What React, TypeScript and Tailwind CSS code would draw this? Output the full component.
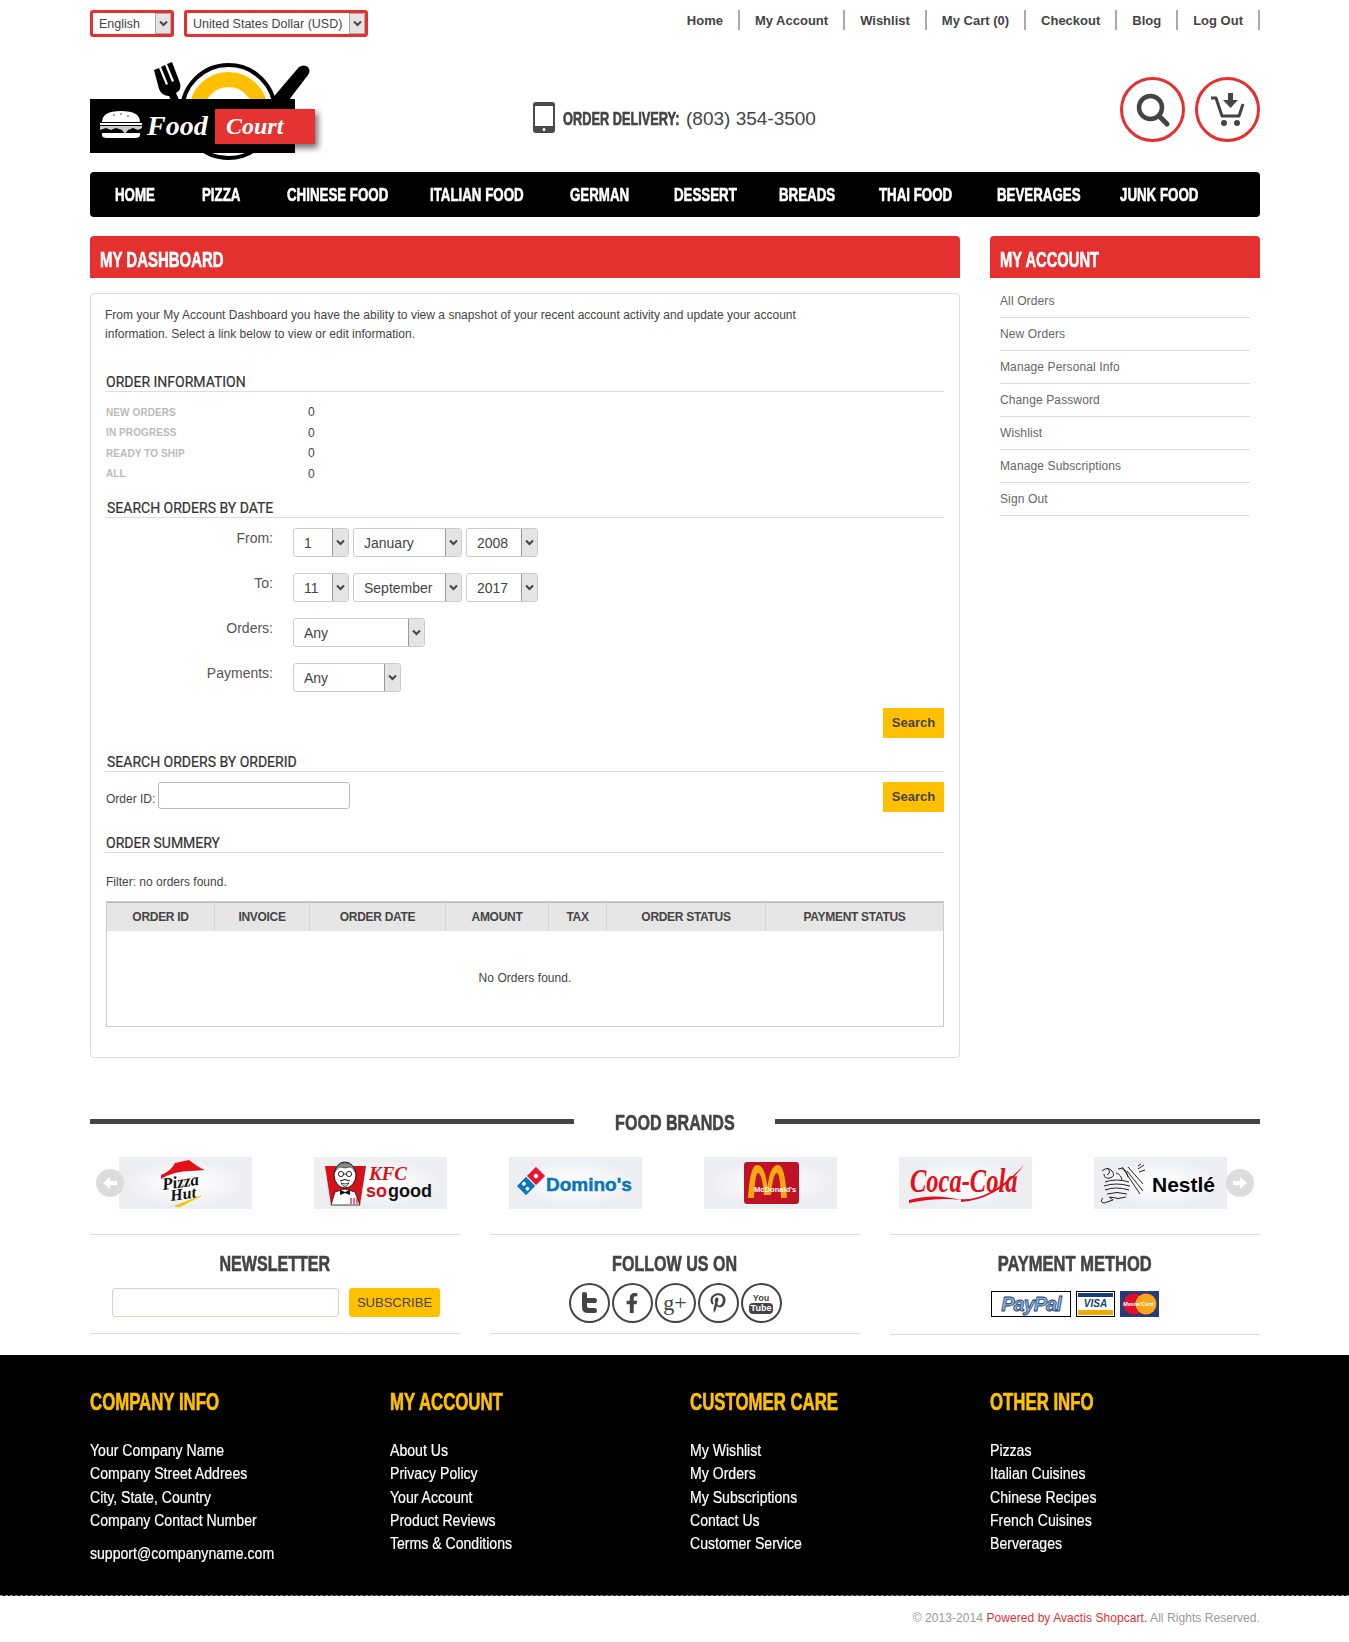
import React from "react";
import { FaFacebookF, FaPinterestP } from "react-icons/fa";

const sans = "font-['Liberation_Sans',Arial,sans-serif]";
const serif = "Liberation Serif";

// 細いフォントが無いので横方向に縮めて見出しを作る
const squeezeLeft = "inline-block origin-left whitespace-nowrap";
const squeezeCenter = "inline-block origin-center whitespace-nowrap";
const heavy = "[-webkit-text-stroke:0.6px_currentColor]";

const navItems = [
  ["HOME", "w-[87px]"],
  ["PIZZA", "w-[85px]"],
  ["CHINESE FOOD", "w-[143px]"],
  ["ITALIAN FOOD", "w-[140px]"],
  ["GERMAN", "w-[104px]"],
  ["DESSERT", "w-[105px]"],
  ["BREADS", "w-[100px]"],
  ["THAI FOOD", "w-[118px]"],
  ["BEVERAGES", "w-[123px]"],
  ["JUNK FOOD", "w-[90px]"],
];

const topLinks = ["Home", "My Account", "Wishlist", "My Cart (0)", "Checkout", "Blog", "Log Out"];

const accountLinks = [
  "All Orders",
  "New Orders",
  "Manage Personal Info",
  "Change Password",
  "Wishlist",
  "Manage Subscriptions",
  "Sign Out",
];

const footerCols = [
  { title: "COMPANY INFO", links: ["Your Company Name", "Company Street Addrees", "City, State, Country", "Company Contact Number"] },
  { title: "MY ACCOUNT", links: ["About Us", "Privacy Policy", "Your Account", "Product Reviews", "Terms & Conditions"] },
  { title: "CUSTOMER CARE", links: ["My Wishlist", "My Orders", "My Subscriptions", "Contact Us", "Customer Service"] },
  { title: "OTHER INFO", links: ["Pizzas", "Italian Cuisines", "Chinese Recipes", "French Cuisines", "Berverages"] },
];

const tableCols = [
  ["ORDER ID", "w-[108px]"],
  ["INVOICE", "w-[95px]"],
  ["ORDER DATE", "w-[136px]"],
  ["AMOUNT", "w-[103px]"],
  ["TAX", "w-[58px]"],
  ["ORDER STATUS", "w-[159px]"],
  ["PAYMENT STATUS", "flex-1"],
];

const Arrow = () => (
  <svg width="9" height="7" viewBox="0 0 9 7">
    <path d="M1 1.5 L4.5 5 L8 1.5" fill="none" stroke="#444" strokeWidth="2" />
  </svg>
);

// 角丸のセレクト風ボックス
const FakeSelect = ({ value, width }: { value: string; width: string }) => (
  <div className={`flex h-[29px] items-stretch rounded-[3px] border border-[#ccc] bg-white ${width}`}>
    <span className="flex-1 pl-[10px] text-[14px] leading-[29px] text-[#444]">{value}</span>
    <span className="flex w-[16px] items-center justify-center rounded-r-[3px] border-l border-[#999] bg-[#e4e4e4]">
      <Arrow />
    </span>
  </div>
);

const TopSelect = ({ value, width }: { value: string; width: string }) => (
  <div className={`flex h-[27px] items-stretch rounded-[3px] border-[3px] border-[#e53030] bg-white ${width}`}>
    <span className="flex-1 pl-[6px] text-[12.5px] leading-[23px] text-[#444]">{value}</span>
    <span className="flex w-[16px] items-center justify-center border border-[#aaa] bg-[#e4e4e4]">
      <Arrow />
    </span>
  </div>
);

const SectionTitle = ({ text, className }: { text: string; className: string }) => (
  <div className={`h-[19px] border-b border-[#ddd] pl-[1px] font-['Roboto'] text-[14px] leading-[19px] text-[#333] [-webkit-text-stroke:0.2px_#333] ${className}`}>{text}</div>
);

const Logo = () => (
  <svg width="240" height="112" viewBox="0 0 240 112">
    <defs>
      <filter id="logoShadow" x="-10%" y="-10%" width="130%" height="150%">
        <feDropShadow dx="3" dy="4" stdDeviation="3" floodColor="#000" floodOpacity="0.55" />
      </filter>
    </defs>
    {/* フォークとナイフ */}
    <g fill="#000">
      <path d="M64 12 l5 -2 l7 17 l2 -1 l-7 -17 l4 -2 l7 17 l2 -1 l-7 -17 l5 -2 l8 21 q2 7 -4 10 l8 18 l-7 3 l-8 -18 q-7 0 -10 -7 z" />
      <path d="M209 9 q5 -3 9 0 q3 4 0 8 l-26 34 l-12 -8 z" />
    </g>
    <circle cx="138.5" cy="53.5" r="46.5" fill="#fff" stroke="#000" strokeWidth="4" />
    <circle cx="138.5" cy="53.5" r="32" fill="#fff" stroke="#ffc000" strokeWidth="15" />
    <rect x="0" y="41" width="205" height="54" fill="#000" />
    <rect x="125" y="51" width="100" height="35" fill="#e53030" filter="url(#logoShadow)" />
    {/* バーガー */}
    <path d="M12 64 q0 -11 19 -11 q19 0 19 11 z" fill="#fff" />
    <g fill="#000">
      <circle cx="24" cy="57" r="0.7" />
      <circle cx="31" cy="56" r="0.7" />
      <circle cx="38" cy="58" r="0.7" />
    </g>
    <rect x="10" y="65" width="42" height="2" fill="#fff" />
    <path d="M10 68 h42 v2 l-4 2 l-5 -2 l-5 2 l-3 4 l-3 -4 l-6 -2 l-5 2 l-5 -2 l-6 2 z" fill="#ccc" />
    <path d="M12 75 h38 v2 q0 3 -5 3 h-28 q-5 0 -5 -3 z" fill="#fff" />
    <text x="57" y="77" fill="#fff" fontFamily={serif} fontStyle="italic" fontWeight="700" fontSize="28">Food</text>
    <text x="136" y="76" fill="#fff" fontFamily={serif} fontStyle="italic" fontWeight="700" fontSize="24">Court</text>
  </svg>
);

const PizzaHut = () => (
  <svg width="133" height="52" viewBox="0 0 133 52">
    <path d="M42 18 Q52 14 56 6 L70 3 Q80 11 86 13 L72 14 Q55 14 42 22 Z" fill="#e3101a" />
    <text x="0" y="0" transform="translate(44 33) rotate(-8)" fontFamily={serif} fontStyle="italic" fontWeight="700" fontSize="17" fill="#111">Pizza</text>
    <text x="0" y="0" transform="translate(52 44) rotate(-8)" fontFamily={serif} fontStyle="italic" fontWeight="700" fontSize="16" fill="#111">Hut</text>
    <path d="M56 49 L82 39 L60 50 Z" fill="#f5c800" stroke="#f5c800" />
  </svg>
);

const Kfc = () => (
  <svg width="133" height="52" viewBox="0 0 133 52">
    <path d="M11 9 L52 9 L46 48 L17 48 Z" fill="#d7101a" />
    {/* 人物 */}
    <path d="M17 48 L21 35 L31 32 L41 35 L46 48 Z" fill="#fff" stroke="#111" strokeWidth="0.8" />
    <ellipse cx="31" cy="18" rx="11" ry="13" fill="#fff" stroke="#111" strokeWidth="1" />
    <path d="M21 15 q1 -9 10 -9 q9 0 10 9 q-2 -5 -5 -5 q-5 2 -10 0 q-3 1 -5 5 z" fill="#888" stroke="#111" strokeWidth="0.5" />
    <circle cx="27" cy="17" r="2.6" fill="#fff" stroke="#111" strokeWidth="0.9" />
    <circle cx="35" cy="17" r="2.6" fill="#fff" stroke="#111" strokeWidth="0.9" />
    <path d="M29.6 17 h2.8" stroke="#111" strokeWidth="0.8" />
    <path d="M26 24 q5 -3 10 0" fill="none" stroke="#111" strokeWidth="1" />
    <path d="M27 26 q4 7 8 0 q-4 2 -8 0 z" fill="#fff" stroke="#111" strokeWidth="0.8" />
    <path d="M26 33 L31 35 L36 33 L36 38 L31 36 L26 38 Z" fill="#111" />
    <path d="M37 41 v6 M40 41 v6 M43 41 v6" stroke="#d7101a" strokeWidth="1.2" />
    <text x="55" y="23" fontFamily={serif} fontStyle="italic" fontWeight="700" fontSize="19" fill="#d7101a">KFC</text>
    <text x="52" y="40" fontFamily="Liberation Sans" fontWeight="700" fontSize="18" fill="#d7101a">so</text>
    <text x="74" y="40" fontFamily="Liberation Sans" fontWeight="700" fontSize="18" fill="#111">good</text>
  </svg>
);

const Dominos = () => (
  <svg width="133" height="52" viewBox="0 0 133 52">
    <g transform="rotate(45 22 24)">
      <rect x="15" y="10" width="14" height="14" fill="#e31837" stroke="#fff" />
      <rect x="15" y="24" width="14" height="14" fill="#0b76b8" stroke="#fff" />
      <circle cx="22" cy="17" r="2.2" fill="#fff" />
      <circle cx="19" cy="31" r="1.9" fill="#fff" />
      <circle cx="25" cy="32" r="1.9" fill="#fff" />
    </g>
    <text x="37" y="34" fontFamily="Liberation Sans" fontWeight="700" fontSize="19" fill="#0b76b8" stroke="#0b76b8" strokeWidth="0.5">Domino's</text>
  </svg>
);

const Mcdonalds = () => (
  <svg width="133" height="52" viewBox="0 0 133 52">
    <rect x="40" y="5" width="55" height="42" rx="3" fill="#c01226" />
    <path d="M44 41 Q46 8 53 8 Q61 8 63.5 30 Q66 8 74 8 Q81 8 83 41 H77 Q76 16 73 16 Q69 16 67 38 H60 Q58 16 54 16 Q51 16 50 41 Z" fill="#f8a80f" />
    <text x="50" y="35" fontFamily="Liberation Sans" fontWeight="700" fontSize="7.6" fill="#fff">McDonald's</text>
  </svg>
);

const CocaCola = () => (
  <svg width="133" height="52" viewBox="0 0 133 52">
    <text x="0" y="0" transform="translate(11 35) scale(1 1.4)" fontFamily={serif} fontStyle="italic" fontWeight="700" fontSize="24.5" fill="#e3101a">Coca-Cola</text>
    <path d="M10 43 Q35 36 62 43 Q40 40 10 46 Z M62 42 Q90 45 125 8 Q100 42 62 45 Z" fill="#e3101a" />
  </svg>
);

const Nestle = () => (
  <svg width="133" height="52" viewBox="0 0 133 52">
    <g fill="none" stroke="#222" strokeWidth="1">
      <path d="M8 14 q6 -5 10 0 q4 5 -2 7 q-6 1 -6 -4 M13 11 q5 4 0 7" />
      <path d="M11 25 q11 -4 24 0 M10 29 q12 -4 26 0 M11 33 q11 -4 24 0 M13 37 q10 -3 20 0 M16 40 q8 3 16 0" />
      <path d="M24 12 q8 -3 10 8 M22 16 q6 2 6 8 M28 10 l18 27 M34 10 l15 17 M33 14 l16 20" />
      <path d="M44 12 l6 -4 M45 15 l6 -2 M44 9 l3 -2 M9 41 q-4 4 1 5 l9 -3 l-4 -3" />
    </g>
    <text x="58" y="35" fontFamily="Liberation Sans" fontWeight="700" fontSize="21" fill="#000">Nestlé</text>
  </svg>
);

const brands = [<PizzaHut />, <Kfc />, <Dominos />, <Mcdonalds />, <CocaCola />, <Nestle />];

const Round = ({ children }: { children: React.ReactNode }) => (
  <div className="flex h-[40px] w-[41px] items-center justify-center rounded-[50%] border-2 border-[#444] text-[#444]">
    {children}
  </div>
);

const BrandArrow = ({ dir, className }: { dir: "left" | "right"; className: string }) => (
  <div className={`absolute top-[12px] flex h-[28px] w-[28px] items-center justify-center rounded-full bg-[#dcdcdc] ${className}`}>
    <svg width="16" height="14" viewBox="0 0 16 14" className={dir === "right" ? "" : "rotate-180"}>
      <path d="M1 5 H8 V1 L15 7 L8 13 V9 H1 Z" fill="#fff" />
    </svg>
  </div>
);

const BlockTitle = ({ text, scale = "scale-x-[0.73]" }: { text: string; scale?: string }) => (
  <div className="text-[22px] font-bold leading-[30px] text-[#444]">
    <span className={`${squeezeCenter} ${heavy} ${scale}`}>{text}</span>
  </div>
);

export default function App() {
  return (
    <div className={`h-[1642px] bg-white ${sans}`}>
      <div className="ml-[90px] w-[1170px]">
        {/* 上部バー */}
        <div className="flex h-[47px] justify-between pt-[10px]">
          <div className="flex gap-[10px]">
            <TopSelect value="English" width="w-[84px]" />
            <TopSelect value="United States Dollar (USD)" width="w-[184px]" />
          </div>
          <div className="flex h-[20px]">
            {topLinks.map((l) => (
              <span key={l} className="border-r-2 border-[#aaa] px-[15px] text-[13px] font-bold leading-[21px] text-[#444]">
                {l}
              </span>
            ))}
          </div>
        </div>

        {/* ロゴ行 */}
        <div className="flex h-[125px] items-start">
          <div className="mt-[11px] h-[112px] w-[240px]">
            <Logo />
          </div>
          <div className="ml-[203px] mt-[54px] flex items-center">
            <svg width="22" height="31" viewBox="0 0 22 31">
              <rect width="22" height="31" rx="3" fill="#4a4a4a" />
              <rect x="2" y="4" width="18" height="20" fill="#fff" />
              <circle cx="11" cy="27.5" r="1.5" fill="#fff" />
            </svg>
            <span className="ml-[8px] mt-[4px] w-[118px] text-[18px] font-bold text-[#444]">
              <span className={`${squeezeLeft} ${heavy} scale-x-[0.71]`}>ORDER DELIVERY:</span>
            </span>
            <span className="ml-[5px] mt-[4px] text-[19px] text-[#444]">(803) 354-3500</span>
          </div>
          <div className="ml-auto mt-[30px] flex gap-[10px]">
            <div className="flex h-[65px] w-[65px] items-center justify-center rounded-full border-[3px] border-[#e53030]">
              <svg width="34" height="34" viewBox="0 0 34 34" fill="none" stroke="#444">
                <circle cx="14.5" cy="14.5" r="11.5" strokeWidth="4.5" />
                <path d="M23 23 L31 31" strokeWidth="5" strokeLinecap="round" />
              </svg>
            </div>
            <div className="flex h-[65px] w-[65px] items-center justify-center rounded-full border-[3px] border-[#e53030]">
              <svg width="36" height="34" viewBox="0 0 36 34">
                <path d="M1 5 H6 L12 23 H29 L33 11" fill="none" stroke="#444" strokeWidth="3" strokeLinejoin="round" />
                <path d="M18 0 H23 V7 H28 L20.5 15 L13 7 H18 Z" fill="#444" />
                <circle cx="14" cy="30" r="3" fill="#444" />
                <circle cx="27" cy="30" r="3" fill="#444" />
              </svg>
            </div>
          </div>
        </div>

        {/* ナビ */}
        <div className="flex h-[45px] items-center rounded-[4px] bg-black pl-[25px] text-[19px] font-bold text-white">
          {navItems.map(([t, w]) => (
            <span key={t} className={`shrink-0 ${w}`}>
              <span className={`${squeezeLeft} ${heavy} mt-[2px] scale-x-[0.7]`}>{t}</span>
            </span>
          ))}
        </div>

        {/* メイン */}
        <div className="mt-[19px] flex gap-[30px]">
          <div className="w-[870px]">
            <div className="h-[42px] rounded-t-[4px] bg-[#e53030] pl-[10px] text-[22px] font-bold leading-[47px] text-white">
              <span className={`${squeezeLeft} ${heavy} scale-x-[0.68]`}>MY DASHBOARD</span>
            </div>
            <div className="mt-[15px] h-[765px] rounded-[4px] border border-[#ddd] pl-[14px] pr-[15px] pt-[12px]">
              <p className="w-[700px] text-[12px] leading-[18.5px] tracking-[0.02px] text-[#444]">
                From your My Account Dashboard you have the ability to view a snapshot of your recent account activity and update your account information. Select a link below to view or edit information.
              </p>

              <SectionTitle text="ORDER INFORMATION" className="mt-[30px]" />
              <div className="mt-[10px]">
                {["NEW ORDERS", "IN PROGRESS", "READY TO SHIP", "ALL"].map((l) => (
                  <div key={l} className="flex h-[20.5px] items-center">
                    <span className="w-[203px] pl-[1px] text-[10px] font-bold tracking-[0.1px] text-[#bbb]">{l}</span>
                    <span className="text-[12px] text-[#444]">0</span>
                  </div>
                ))}
              </div>

              <SectionTitle text="SEARCH ORDERS BY DATE" className="mt-[15px] pl-[2px]" />
              <div className="mt-[10px] flex flex-col gap-[16px]">
                <div className="flex h-[29px]">
                  <span className="w-[168px] text-right text-[14px] text-[#555]">From:</span>
                  <div className="ml-[20px] flex gap-[4px]">
                    <FakeSelect value="1" width="w-[56px]" />
                    <FakeSelect value="January" width="w-[109px]" />
                    <FakeSelect value="2008" width="w-[72px]" />
                  </div>
                </div>
                <div className="flex h-[29px]">
                  <span className="w-[168px] text-right text-[14px] text-[#555]">To:</span>
                  <div className="ml-[20px] flex gap-[4px]">
                    <FakeSelect value="11" width="w-[56px]" />
                    <FakeSelect value="September" width="w-[109px]" />
                    <FakeSelect value="2017" width="w-[72px]" />
                  </div>
                </div>
                <div className="flex h-[29px]">
                  <span className="w-[168px] text-right text-[14px] text-[#555]">Orders:</span>
                  <div className="ml-[20px]"><FakeSelect value="Any" width="w-[132px]" /></div>
                </div>
                <div className="flex h-[29px]">
                  <span className="w-[168px] text-right text-[14px] text-[#555]">Payments:</span>
                  <div className="ml-[20px]"><FakeSelect value="Any" width="w-[108px]" /></div>
                </div>
              </div>
              <div className="mt-[16px] flex justify-end">
                <button className="h-[30px] w-[61px] bg-[#ffc000] text-[13px] font-bold text-[#444]">Search</button>
              </div>

              <SectionTitle text="SEARCH ORDERS BY ORDERID" className="mt-[15px] pl-[2px]" />
              <div className="mt-[10px] flex h-[30px] items-start">
                <span className="mt-[8px] w-[53px] pl-[1px] text-[12px] leading-[18px] text-[#444]">Order ID:</span>
                <div className="h-[27px] w-[192px] rounded-[3px] border border-[#bbb] bg-white" />
                <button className="ml-auto h-[30px] w-[61px] bg-[#ffc000] text-[13px] font-bold text-[#444]">Search</button>
              </div>

              <SectionTitle text="ORDER SUMMERY" className="mt-[22px]" />
              <div className="mt-[20px] h-[18px] pl-[1px] text-[12px] leading-[18px] text-[#444]">Filter: no orders found.</div>
              <div className="ml-[1px] mt-[10px] h-[126px] border border-[#ccc]">
                <div className="flex h-[29px] border-t border-[#bbb] bg-[#e6e6e6]">
                  {tableCols.map(([t, w]) => (
                    <div key={t} className={`flex items-center justify-center border-r border-[#cdd5da] text-[12px] font-bold tracking-[-0.3px] text-[#444] last:border-r-0 ${w}`}>
                      {t}
                    </div>
                  ))}
                </div>
                <div className="flex h-[89px] items-center justify-center pt-[4px] text-[12px] tracking-[0.05px] text-[#444]">No Orders found.</div>
              </div>
            </div>
          </div>

          <div className="w-[270px]">
            <div className="h-[42px] rounded-t-[4px] bg-[#e53030] pl-[10px] text-[22px] font-bold leading-[47px] text-white">
              <span className={`${squeezeLeft} ${heavy} scale-x-[0.67]`}>MY ACCOUNT</span>
            </div>
            <div className="mt-[7px] ml-[10px] w-[250px]">
              {accountLinks.map((l) => (
                <div key={l} className="h-[33px] border-b border-[#ddd] text-[12px] leading-[33px] tracking-[0.12px] text-[#666]">{l}</div>
              ))}
            </div>
          </div>
        </div>

        {/* ブランド */}
        <div className="mt-[50px] flex h-[30px] items-start">
          <div className="mt-[11px] h-[5px] w-[484px] bg-[#444]" />
          <div className="flex-1 text-center">
            <BlockTitle text="FOOD BRANDS" />
          </div>
          <div className="mt-[11px] h-[5px] w-[485px] bg-[#444]" />
        </div>
        <div className="relative mt-[19px] flex h-[52px] gap-[62px] pl-[29px]">
          {brands.map((b, i) => (
            <div key={i} className="h-[52px] w-[133px] bg-[radial-gradient(ellipse_at_center,#ffffff_10%,#eceef2_65%)]">{b}</div>
          ))}
          <BrandArrow dir="left" className="left-[6px]" />
          <BrandArrow dir="right" className="left-[1136px]" />
        </div>

        {/* ニュースレター等 */}
        <div className="mt-[25px] flex gap-[30px]">
          <div className="h-[100px] w-[370px] border-y border-[#ddd] pt-[14px] text-center">
            <BlockTitle text="NEWSLETTER" />
            <div className="mt-[9px] flex pl-[22px]">
              <div className="h-[29px] w-[227px] rounded-[3px] border border-[#d5d5c5]" />
              <button className="ml-[10px] h-[29px] w-[91px] rounded-[3px] bg-[#ffc000] text-[13px] text-[#444]">SUBSCRIBE</button>
            </div>
          </div>
          <div className="h-[100px] w-[370px] border-y border-[#ddd] pt-[14px] text-center">
            <BlockTitle text="FOLLOW US ON" />
            <div className="mt-[4px] flex justify-center gap-[2px]">
              <Round>
                <svg width="18" height="22" viewBox="0 0 18 22">
                  <path d="M2 2 Q2 0 4 0 Q7 0 7 2 V6 H15 Q17 6 17 8.5 Q17 11 15 11 H7 V14 Q7 16 9 16 H15 Q17 16 17 18.5 Q17 21 15 21 H8 Q2 21 2 15 Z" fill="#444" />
                </svg>
              </Round>
              <Round><FaFacebookF size={20} /></Round>
              <Round>
                <span className="font-['Liberation_Serif'] text-[22px] leading-[26px]">g+</span>
              </Round>
              <Round><FaPinterestP size={20} /></Round>
              <Round>
                <div className="flex flex-col items-center">
                  <span className="text-[9px] font-bold leading-[10px]">You</span>
                  <span className="rounded-[4px] bg-[#444] px-[2px] text-[9px] font-bold leading-[11px] text-white">Tube</span>
                </div>
              </Round>
            </div>
          </div>
          <div className="h-[101px] w-[370px] border-y border-[#ddd] pt-[14px] text-center">
            <BlockTitle text="PAYMENT METHOD" scale="scale-x-[0.75]" />
            <div className="mt-[12px] flex justify-center gap-[5px]">
              <div className="flex h-[26px] w-[80px] items-center justify-center border border-black bg-white text-[20px] font-bold italic leading-none tracking-[-1px] text-[#8fb1d3]">
                <span className="[-webkit-text-stroke:0.8px_#1a3f7c]">PayPal</span>
              </div>
              <div className="flex h-[26px] w-[39px] flex-col justify-between border border-black bg-white p-[1px]">
                <div className="h-[4px] bg-[#163f78]" />
                <span className="text-center text-[10px] font-bold italic leading-[10px] text-[#163f78]">VISA</span>
                <div className="h-[5px] bg-[#f5a800]" />
              </div>
              <div className="h-[26px] w-[39px]">
                <svg width="39" height="26" viewBox="0 0 39 26">
                  <rect width="39" height="26" fill="#2d3a78" />
                  <circle cx="14" cy="13" r="10.5" fill="#e0102a" />
                  <circle cx="26" cy="13" r="10.5" fill="#f5a81c" />
                  <text x="3" y="15" fontFamily="Liberation Sans" fontStyle="italic" fontWeight="700" fontSize="5.6" fill="#fff">MasterCard</text>
                </svg>
              </div>
            </div>
          </div>
        </div>
      </div>

      {/* フッター */}
      <div className="mt-[20px] h-[241px] border-b border-dashed border-[#888] bg-black">
        <div className="ml-[90px] grid w-[1170px] grid-cols-[300px_300px_300px_270px] pt-[32px]">
          {footerCols.map((c, i) => (
            <div key={c.title} className="text-[16px] text-white">
              <div className="h-[30px] text-[23px] font-bold leading-[30px] text-[#ffc000]">
                <span className={`${squeezeLeft} ${heavy} scale-x-[0.73]`}>{c.title}</span>
              </div>
              <div className="mt-[22px]">
                {c.links.map((l) => (
                  <div key={l} className="h-[23.3px] leading-[23px]">
                    <span className={`${squeezeLeft} scale-x-[0.88] [-webkit-text-stroke:0.2px_#fff]`}>{l}</span>
                  </div>
                ))}
                {i === 0 && (
                  <div className="mt-[10px] leading-[23px]">
                    <span className={`${squeezeLeft} scale-x-[0.88] [-webkit-text-stroke:0.2px_#fff]`}>support@companyname.com</span>
                  </div>
                )}
              </div>
            </div>
          ))}
        </div>
      </div>
      <div className="ml-[90px] mt-[13px] w-[1170px] text-right text-[12px] leading-[18px] tracking-[0.06px] text-[#999]">
        © 2013-2014 <span className="text-[#e53030]">Powered by Avactis Shopcart.</span> All Rights Reserved.
      </div>
    </div>
  );
}
